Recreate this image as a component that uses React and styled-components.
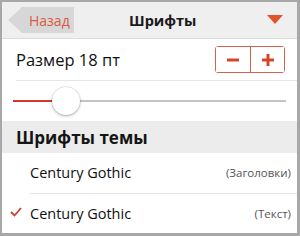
import React, { useState } from "react";
import styled, { createGlobalStyle } from "styled-components";

const Global = createGlobalStyle`
  html, body { margin: 0; padding: 0; background: #fff; }
  body { font-family: "Open Sans", "Liberation Sans", sans-serif; }
  * { box-sizing: border-box; }
`;

const Frame = styled.div`
  width: 300px;
  height: 236px;
  border: 2px solid #a8a8a8;
  border-bottom-width: 3px;
  border-right-width: 3px;
  background: #fff;
  display: flex;
  flex-direction: column;
  overflow: hidden;
`;

const Header = styled.div`
  height: 37px;
  flex: none;
  background: #efefef;
  border-bottom: 1px solid #dcdcdc;
  display: grid;
  grid-template-columns: 121px auto 1fr;
  align-items: center;
  padding: 0 12px 0 6px;
`;

const BackButton = styled.button`
  justify-self: start;
  height: 26px;
  width: 66px;
  border: none;
  background: #d7d7d7;
  clip-path: polygon(0 50%, 14px 0, 100% 0, 100% 100%, 14px 100%);
  color: #dc5a45;
  font-family: inherit;
  font-size: 14px;
  padding: 0 0 0 21px;
  text-align: left;
`;

const Title = styled.div`
  font-weight: 700;
  font-size: 14.5px;
  color: #1a1a1a;
`;

const Dropdown = styled.svg`
  justify-self: end;
  margin-right: 2px;
`;

const Row = styled.div`
  display: flex;
  align-items: center;
  justify-content: space-between;
  height: ${(p) => p.h}px;
  flex: none;
  margin-left: ${(p) => p.indent}px;
  padding-right: ${(p) => p.pr || 0}px;
  border-bottom: ${(p) => (p.line ? "1px solid #e6e6e6" : "none")};
`;

const Label = styled.span`
  font-size: 16.5px;
  color: #111;
`;

const Stepper = styled.div`
  display: flex;
  border: 1px solid #d0634e;
  border-radius: 3px;
  height: 27px;
  margin-right: 1px;
`;

const StepButton = styled.button`
  width: 34px;
  border: none;
  background: #fff;
  padding: 0;
  display: flex;
  align-items: center;
  justify-content: center;
  & + & {
    border-left: 1px solid #d0634e;
  }
`;

const SliderWrap = styled.div`
  height: 40px;
  flex: none;
  margin: 0 11px 0 11px;
  display: flex;
  align-items: center;
`;

const Track = styled.div`
  flex: 1;
  height: 2px;
  background: #c4c4c4;
  position: relative;
`;

const Fill = styled.div`
  height: 2px;
  background: #d9362a;
`;

const Thumb = styled.div`
  position: absolute;
  top: 50%;
  width: 28px;
  height: 28px;
  margin: -14px 0 0 -14px;
  border-radius: 50%;
  background: #fff;
  box-shadow: 0 1px 3px rgba(0, 0, 0, 0.3), 0 0 0 0.5px rgba(0, 0, 0, 0.12);
`;

const Section = styled.div`
  height: 32px;
  flex: none;
  background: #ececec;
  display: flex;
  align-items: center;
  padding-left: 14px;
  font-weight: 700;
  font-size: 17px;
  color: #151515;
`;

const FontRow = styled.div`
  position: relative;
  display: flex;
  align-items: center;
  justify-content: space-between;
  height: ${(p) => p.h}px;
  margin-left: 28px;
  padding-right: 6px;
  border-bottom: ${(p) => (p.line ? "1px solid #e6e6e6" : "none")};
`;

const FontName = styled.span`
  font-size: 14.5px;
  color: #111;
`;

const Note = styled.span`
  font-size: 11.5px;
  color: #555;
`;

const Check = styled.svg`
  position: absolute;
  left: -20px;
  top: 50%;
  margin-top: -6px;
`;

export default function App() {
  const [size, setSize] = useState(18);
  const pct = ((size - 8) / 52) * 100;
  return (
    <>
      <Global />
      <Frame>
        <Header>
          <BackButton>Назад</BackButton>
          <Title>Шрифты</Title>
          <Dropdown width="16" height="10" viewBox="0 0 16 10">
            <path d="M0 0 H16 L8 9 Z" fill="#e0532b" />
          </Dropdown>
        </Header>
        <Row h={42} indent={14} pr={11} line>
          <Label>Размер {size} пт</Label>
          <Stepper>
            <StepButton onClick={() => setSize((s) => s - 1)} aria-label="−">
              <svg width="12" height="12" viewBox="0 0 12 12">
                <rect x="0" y="4.5" width="12" height="3" fill="#d8442a" />
              </svg>
            </StepButton>
            <StepButton onClick={() => setSize((s) => s + 1)} aria-label="+">
              <svg width="12" height="12" viewBox="0 0 12 12">
                <rect x="0" y="4.5" width="12" height="3" fill="#d8442a" />
                <rect x="4.5" y="0" width="3" height="12" fill="#d8442a" />
              </svg>
            </StepButton>
          </Stepper>
        </Row>
        <SliderWrap>
          <Track>
            <Fill style={{ width: `${pct}%` }} />
            <Thumb style={{ left: `${pct}%` }} />
          </Track>
        </SliderWrap>
        <Section>Шрифты темы</Section>
        <FontRow h={41} line>
          <FontName>Century Gothic</FontName>
          <Note>(Заголовки)</Note>
        </FontRow>
        <FontRow h={40}>
          <Check width="12" height="10" viewBox="0 0 12 10">
            <path d="M1 5 L4.5 8.5 L11 1" fill="none" stroke="#c9403a" strokeWidth="1.8" />
          </Check>
          <FontName>Century Gothic</FontName>
          <Note>(Текст)</Note>
        </FontRow>
      </Frame>
    </>
  );
}
